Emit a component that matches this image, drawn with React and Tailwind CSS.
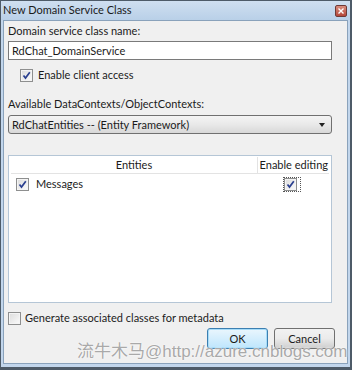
import React from 'react';

const font = { fontFamily: 'Lato, "Noto Sans", sans-serif' };

const Check = ({ checked = true, className = '' }) => (
  <span
    className={`inline-flex w-[13px] h-[13px] border border-[#8e8f8f] bg-gradient-to-br from-[#dcdcdc] to-[#fbfbfb] items-center justify-center shrink-0 ${className}`}
  >
    <span className="flex w-[11px] h-[11px] border border-[#f4f4f4] items-center justify-center">
      {checked && (
        <svg width="9" height="9" viewBox="0 0 9 9">
          <path d="M1.5 4.5 L3.5 7 L7.8 1.2" fill="none" stroke="#2a3f8f" strokeWidth="1.7" />
        </svg>
      )}
    </span>
  </span>
);

export default function App() {
  return (
    <div className="w-[354px] h-[373px] bg-white text-[11px] text-[#1b1b1b]" style={font}>
      <div className="w-[352px] h-[370px] border border-[#4e5b68] border-b-[3px] border-r-[2px] bg-[#c2d6ec] flex flex-col relative overflow-hidden">
        {/* title bar */}
        <div className="h-[19px] flex items-center justify-between pl-[2px] pr-[3px] bg-gradient-to-b from-[#cfdff0] to-[#b9d0e8]">
          <span className="text-[11px] text-[#1a1a1a]">New Domain Service Class</span>
          <span className="w-[12px] h-[12px] rounded-[2px] border border-[#6e3a36] bg-gradient-to-b from-[#d98e7f] to-[#b4463a] flex items-center justify-center">
            <svg width="6" height="6" viewBox="0 0 6 6">
              <path d="M0.5 0.5 L5.5 5.5 M5.5 0.5 L0.5 5.5" stroke="#fff" strokeWidth="1.4" />
            </svg>
          </span>
        </div>

        {/* content */}
        <div className="flex-1 mx-[2px] mb-[3px] bg-[#f0f0f0] border border-[#8aa2bb] flex flex-col px-[4px]">
          <div className="mt-[2px] leading-[16px]">Domain service class name:</div>
          <div className="mt-[2px] w-[324px] h-[19px] border border-[#7a7a7a] bg-white flex items-center px-[3px] leading-none">
            RdChat_DomainService
          </div>
          <label className="mt-[7px] ml-[12px] flex items-center gap-[5px] leading-[16px]">
            <Check />
            <span>Enable client access</span>
          </label>

          <div className="mt-[13px] leading-[16px]">Available DataContexts/ObjectContexts:</div>
          <div className="mt-[3px] w-[324px] h-[19px] border border-[#707070] rounded-[3px] bg-gradient-to-b from-[#f4f4f4] via-[#e9e9e9] to-[#d8d8d8] flex items-center justify-between pl-[3px] pr-[6px] leading-none">
            <span>RdChatEntities -- (Entity Framework)</span>
            <svg width="6" height="4" viewBox="0 0 6 4">
              <path d="M0 0 H6 L3 4 Z" fill="#222" />
            </svg>
          </div>

          {/* list */}
          <div className="mt-[21px] w-[324px] h-[148px] border border-[#b5c6d6] bg-white flex flex-col">
            <div className="flex h-[17px] mx-[2px] mt-[1px] border-b border-[#e3e3e3] leading-[16px]">
              <div className="w-[247px] text-center border-r border-[#e3e3e3]">Entities</div>
              <div className="flex-1 text-right pr-[1px] whitespace-nowrap">Enable editing</div>
            </div>
            <div className="flex h-[21px] items-center mx-[2px]">
              <div className="w-[247px] flex items-center gap-[7px] pl-[5px]">
                <Check />
                <span>Messages</span>
              </div>
              <div className="flex-1 flex justify-center pr-[4px]">
                <span className="flex border border-dotted border-[#555] pr-[3px]">
                  <Check className="border-[#7f8fa0]" />
                </span>
              </div>
            </div>
          </div>

          <label className="mt-[7px] flex items-center gap-[4px] leading-[16px]">
            <Check checked={false} />
            <span>Generate associated classes for metadata</span>
          </label>

          <div className="mt-[2px] flex justify-end gap-[6px] pr-[8px]">
            <button className="w-[61px] h-[21px] rounded-[3px] border border-[#3c7fb1] bg-gradient-to-b from-[#eaf6fd] to-[#bee6fd] shadow-[inset_0_0_0_1px_#a6dcf9] leading-none">
              OK
            </button>
            <button className="w-[61px] h-[21px] rounded-[3px] border border-[#707070] bg-gradient-to-b from-[#f2f2f2] via-[#ebebeb] to-[#cfcfcf] leading-none">
              Cancel
            </button>
          </div>
        </div>

        {/* watermark */}
        <div
          className="absolute left-[76px] top-[341px] text-[17px] leading-[20px] text-[#a9a9a9] whitespace-nowrap pointer-events-none"
          style={{ fontFamily: '"Liberation Sans", "Noto Sans CJK SC", sans-serif', textShadow: '0 0 2px #fff, 0 0 1px #fff' }}
        >
          流牛木马@http://azure.cnblogs.com
        </div>
      </div>
    </div>
  );
}
